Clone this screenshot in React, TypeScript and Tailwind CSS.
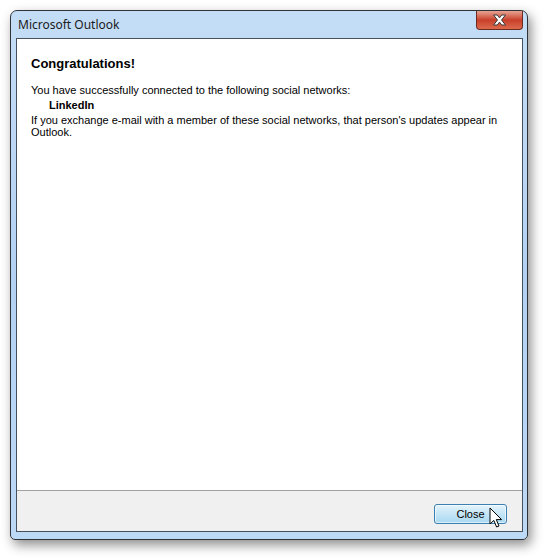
import React from "react";

function CloseGlyph() {
  return (
    <svg width="15" height="12" viewBox="0 0 15 12">
      <path
        d="M1.5 1 H5.3 L7.5 3.9 L9.7 1 H13.5 L9.5 6 L13.5 11 H9.7 L7.5 8.1 L5.3 11 H1.5 L5.5 6 Z"
        fill="#ffffff"
        stroke="#3b3b3b"
        strokeWidth="1"
        strokeLinejoin="round"
      />
    </svg>
  );
}

function Pointer() {
  return (
    <svg width="14" height="22" viewBox="0 0 14 22">
      <path
        d="M1 1 L1 17 L4.8 13.4 L7.6 20 L10 19 L7.3 12.6 L12.6 12.6 Z"
        fill="#ffffff"
        stroke="#000000"
        strokeWidth="1"
        strokeLinejoin="round"
      />
    </svg>
  );
}

export default function App() {
  return (
    <div className="w-[548px] h-[558px] bg-white pt-[10px] pl-[10px]">
      {/* window frame */}
      <div className="w-[518px] h-[530px] flex flex-col rounded-t-[7px] rounded-b-[5px] border border-[#2f3338] bg-gradient-to-b from-[#c4ddf6] via-[#b3d2f3] to-[#bcd9f6] shadow-[3px_5px_12px_rgba(0,0,0,0.45)] pl-[5px] pr-[4px] pb-[7px]">
        {/* title bar */}
        <div className="h-[27px] flex items-start justify-between">
          <span className="mt-[7px] ml-[2px] text-[12px] leading-[14px] text-[#1a1a1a] font-['Noto_Sans',sans-serif]">
            Microsoft Outlook
          </span>
          <button className="w-[47px] h-[19px] flex items-center justify-center rounded-b-[4px] border border-t-0 border-[#6b2a22] bg-gradient-to-b from-[#e6a293] via-[#c83f29] to-[#dc6a4c]">
            <CloseGlyph />
          </button>
        </div>

        {/* client area */}
        <div className="flex-1 flex flex-col border border-[#47515d] bg-white font-['Liberation_Sans',Arial,sans-serif] text-black">
          <div className="flex-1 pl-[14px] pr-[12px]">
            <h1 className="mt-[17px] text-[13px] leading-[16px] font-bold">Congratulations!</h1>
            <p className="mt-[11px] text-[11px] leading-[14px]">
              You have successfully connected to the following social networks:
            </p>
            <p className="mt-[1px] pl-[18px] text-[11px] leading-[14px] font-bold">LinkedIn</p>
            <p className="mt-[2px] text-[11px] leading-[12px]">
              If you exchange e-mail with a member of these social networks, that person&#39;s updates appear in Outlook.
            </p>
          </div>

          {/* footer */}
          <div className="h-[41px] border-t border-[#a0a0a0] bg-[#f0f0f0] flex items-start justify-end pr-[15px] pt-[10px]">
            <div className="relative">
              <button className="w-[73px] h-[20px] rounded-[3px] border border-[#3c7fb1] bg-gradient-to-b from-[#e5f4fc] via-[#c4e5f6] to-[#a9d9f2] text-[11px] text-black font-['Liberation_Sans',Arial,sans-serif] shadow-[inset_0_0_0_1px_rgba(255,255,255,0.6)]">
                Close
              </button>
              <div className="absolute left-[55px] top-[6px]">
                <Pointer />
              </div>
            </div>
          </div>
        </div>
      </div>
    </div>
  );
}
